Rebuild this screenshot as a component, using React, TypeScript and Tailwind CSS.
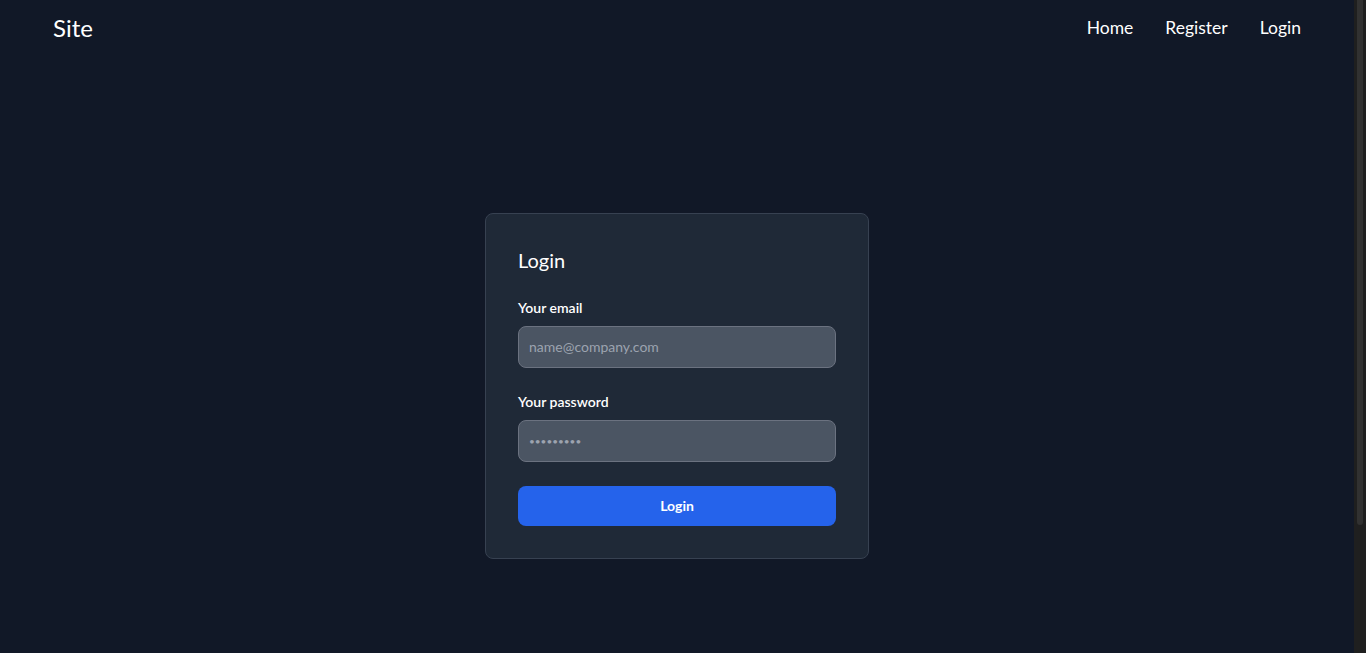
export default function App() {
  return (
    <div
      className="flex h-screen overflow-hidden bg-[#111827] text-white"
      style={{ fontFamily: 'Lato, "Noto Sans", sans-serif' }}
    >
      <div className="min-w-0 flex-1">
        <nav className="flex h-14 items-center justify-between px-[53px]">
          <a className="text-2xl">Site</a>
          <ul className="flex items-center gap-8 text-[17.5px]">
            <li>Home</li>
            <li>Register</li>
            <li>Login</li>
          </ul>
        </nav>
        <main className="flex h-[659px] items-center justify-center">
          <div className="w-96 rounded-lg border border-[#374151] bg-[#1f2937] p-8">
            <h1 className="text-xl leading-7">Login</h1>
            <form className="mt-6 space-y-6">
              <div>
                <label className="mb-2 block text-sm font-semibold">Your email</label>
                <input
                  type="email"
                  placeholder="name@company.com"
                  className="block w-full rounded-lg border border-[#6b7280] bg-[#4b5563] p-2.5 text-sm text-white placeholder-[#9ca3af] outline-none"
                />
              </div>
              <div>
                <label className="mb-2 block text-sm font-semibold">Your password</label>
                <input
                  type="password"
                  placeholder="•••••••••"
                  className="block w-full rounded-lg border border-[#6b7280] bg-[#4b5563] p-2.5 text-[10px] leading-5 text-white placeholder-[#9ca3af] outline-none"
                />
              </div>
              <button
                type="button"
                className="block w-full rounded-lg bg-[#2563eb] py-2.5 text-center text-sm font-bold text-white"
              >
                Login
              </button>
            </form>
          </div>
        </main>
      </div>
      <div className="flex w-3 flex-col bg-[#1f1f1f] px-[3px]">
        <div className="h-[525px] rounded-b-[3px] bg-[#313131]" />
      </div>
    </div>
  );
}
